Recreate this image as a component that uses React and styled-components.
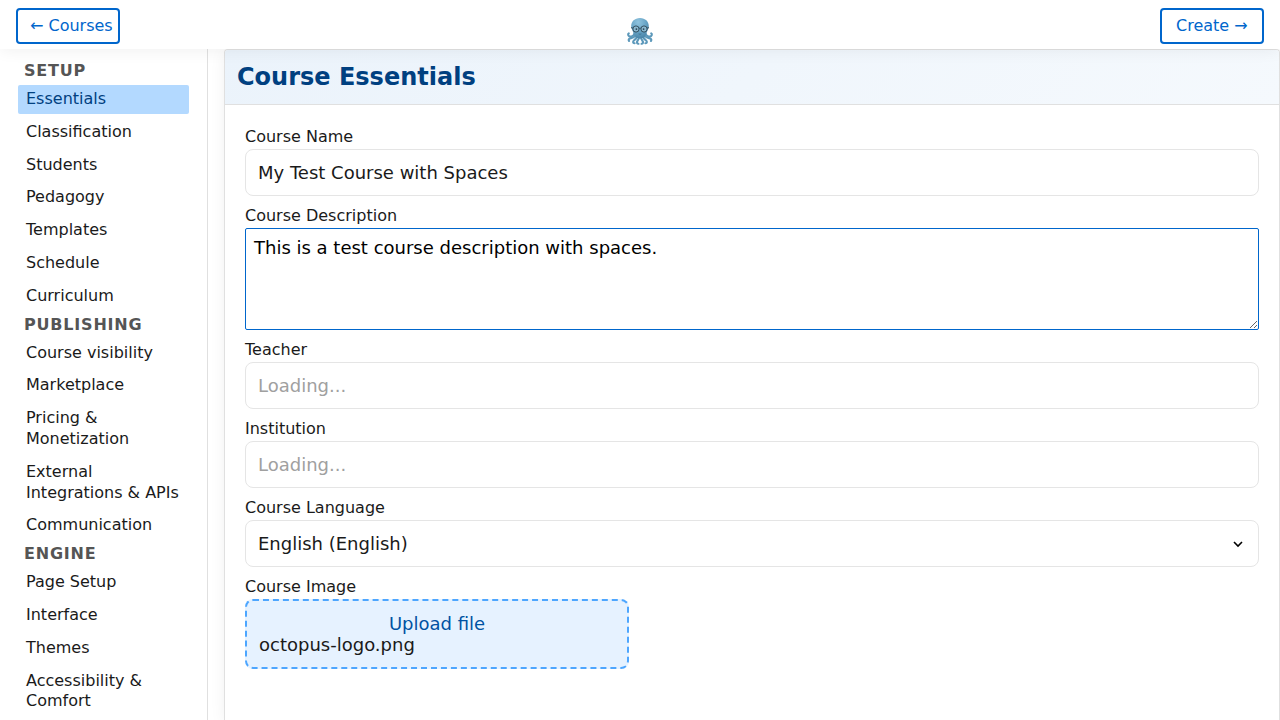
import React from "react";
import styled, { createGlobalStyle, css } from "styled-components";

const Global = createGlobalStyle`
  *, *::before, *::after { box-sizing: border-box; }
  body {
    margin: 0;
    overflow: hidden;
    background: #fff;
    color: #1a1a1a;
    font-family: "DejaVu Sans", sans-serif;
    font-size: 16px;
    line-height: 1.3;
  }
  button, input, textarea, select { font-family: inherit; }
`;

const Page = styled.div`
  display: flex;
  flex-direction: column;
  height: 100vh;
  overflow: hidden;
`;

const TopBar = styled.header`
  position: relative;
  z-index: 2;
  flex: none;
  display: grid;
  grid-template-columns: 1fr auto 1fr;
  height: 49px;
  padding: 8px 16px 0;
  background: #fff;
  box-shadow: 0 2px 16px rgba(0, 0, 0, 0.06);
`;

const NavButton = styled.button`
  justify-self: ${(p) => (p.$end ? "end" : "start")};
  width: 104px;
  height: 36px;
  padding: 0 0 2px ${(p) => (p.$end ? "14px" : "12px")};
  border: 2px solid #0066cc;
  border-radius: 4px;
  background: #fff;
  color: #0066cc;
  font-size: 16px;
  text-align: left;
  white-space: nowrap;
`;

const Logo = styled.svg`
  width: 28px;
  height: 28px;
  margin-top: 9px;
`;

const Body = styled.div`
  flex: 1;
  min-height: 0;
  display: flex;
`;

const Sidebar = styled.nav`
  flex: none;
  width: 208px;
  padding: 8px 18px;
  border-right: 1px solid #e0e0e0;
  overflow: hidden;
`;

const SectionTitle = styled.h2`
  margin: 0;
  height: 28px;
  padding: 4px 6px 0;
  color: #555;
  font-size: 16px;
  font-weight: 700;
  letter-spacing: 0.8px;
`;

const NavList = styled.ul`
  display: flex;
  flex-direction: column;
  gap: 4px;
  margin: 0;
  padding: 0;
  list-style: none;
`;

const NavItem = styled.li`
  padding: 4px 8px;
  border-radius: 2px;
  ${(p) =>
    p.$active &&
    css`
      background: #b3d9ff;
      color: #004080;
    `}
`;

const Main = styled.main`
  flex: 1;
  min-width: 0;
  padding-left: 16px;
  display: flex;
`;

const Card = styled.section`
  flex: 1;
  min-width: 0;
  border: 1px solid #e0e0e0;
  border-bottom: 0;
  border-radius: 4px 4px 0 0;
  background: #fff;
  box-shadow: 0 2px 16px rgba(0, 0, 0, 0.06);
`;

const CardHeader = styled.div`
  height: 55px;
  padding: 12px;
  border-bottom: 1px solid #e0e0e0;
  border-radius: 3px 3px 0 0;
  background: linear-gradient(135deg, #ebf3fb 0%, #f5f9fd 100%);
`;

const CardTitle = styled.h1`
  margin: 0;
  color: #004080;
  font-size: 24px;
  line-height: 31px;
  font-weight: 700;
`;

const Form = styled.form`
  display: flex;
  flex-direction: column;
  gap: 8px;
  padding: 20px;
`;

const Field = styled.div`
  display: flex;
  flex-direction: column;
`;

const Label = styled.label`
  line-height: 24px;
`;

const control = css`
  width: 100%;
  height: 47px;
  padding: 0 12px;
  border: 1px solid #e5e5e5;
  border-radius: 8px;
  background: #fff;
  color: #1a1a1a;
  font-size: 18px;
  outline: none;
`;

const Input = styled.input`
  ${control}
  &::placeholder { color: #a0a0a0; opacity: 1; }
`;

const TextArea = styled.textarea`
  display: block;
  width: 100%;
  height: 102px;
  padding: 8px;
  border: 1px solid #0066cc;
  border-radius: 2px;
  background: #fff;
  color: #000;
  font-size: 18px;
  line-height: 21px;
  outline: none;
  resize: vertical;
`;

const SelectBox = styled.div`
  ${control}
  display: flex;
  align-items: center;
  justify-content: space-between;
`;

const Chevron = styled.svg`
  width: 16px;
  height: 16px;
`;

const DropZone = styled.div`
  width: 384px;
  height: 70px;
  padding: 12px;
  border: 2px dashed #4da6ff;
  border-radius: 8px;
  background: #e6f2ff;
  font-size: 18px;
  line-height: 21px;
`;

const UploadLabel = styled.div`
  color: #0052a3;
  text-align: center;
`;

const sections = [
  {
    title: "SETUP",
    items: ["Essentials", "Classification", "Students", "Pedagogy", "Templates", "Schedule", "Curriculum"],
  },
  {
    title: "PUBLISHING",
    items: ["Course visibility", "Marketplace", "Pricing & Monetization", "External Integrations & APIs", "Communication"],
  },
  {
    title: "ENGINE",
    items: ["Page Setup", "Interface", "Themes", "Accessibility & Comfort"],
  },
];

function Octopus() {
  return (
    <Logo viewBox="0 0 28 28" fill="none" aria-label="Octopus">
      <defs>
        <radialGradient id="skin" cx="0.4" cy="0.2" r="0.85">
          <stop offset="0" stopColor="#8fc3de" />
          <stop offset="0.55" stopColor="#66a3c5" />
          <stop offset="1" stopColor="#4580a4" />
        </radialGradient>
      </defs>
      <g stroke="#5c98ba" strokeWidth="2.1" strokeLinecap="round" strokeLinejoin="round">
        <path d="M8.5 16.5C7.5 20 3.5 20.5 2.3 18.2Q1.7 17 2.8 16.4" />
        <path d="M10 18C7.5 21.5 5 20.8 3.6 21.6Q2 22.6 3.1 24" />
        <path d="M11 19C10.5 23 7.6 22.6 7.2 24.6Q7 26.3 8.6 26.3" />
        <path d="M13 19.5C13.3 22.5 11.2 23.5 11 25Q11 27 12.4 26.8" />
        <path d="M15 19.5C14.7 22.5 16.8 23.5 17 25Q17 27 15.6 26.8" />
        <path d="M17 19C17.5 23 20.4 22.6 20.8 24.6Q21 26.3 19.4 26.3" />
        <path d="M18 18C20.5 21.5 23 20.8 24.4 21.6Q26 22.6 24.9 24" />
        <path d="M19.5 16.5C20.5 20 24.5 20.5 25.7 18.2Q26.3 17 25.2 16.4" />
      </g>
      <path
        d="M14 1C8.7 1 5.2 4.6 5.2 9.2C5.2 12 7.2 14.2 7.8 17C8.5 20.2 11 21.6 14 21.6S19.5 20.2 20.2 17C20.8 14.2 22.8 12 22.8 9.2C22.8 4.6 19.3 1 14 1Z"
        fill="url(#skin)"
      />
      <g fill="#8ab8d0" stroke="#2c4656" strokeWidth="0.9">
        <circle cx="10" cy="12" r="3.1" />
        <circle cx="18" cy="12" r="3.1" />
        <path d="M13.1 11.4Q14 10.7 14.9 11.4M7 11.2L5 10.6M21 11.2L23 10.6" />
      </g>
      <circle cx="10.4" cy="12.1" r="0.9" fill="#2b4555" />
      <circle cx="17.6" cy="12.1" r="0.9" fill="#2b4555" />
      <path d="M12.6 16.8Q14 17.8 15.4 16.8" stroke="#376885" strokeWidth="0.7" />
    </Logo>
  );
}

export default function App() {
  return (
    <Page>
      <Global />
      <TopBar>
        <NavButton>← Courses</NavButton>
        <Octopus />
        <NavButton $end>Create →</NavButton>
      </TopBar>
      <Body>
        <Sidebar>
          {sections.map((section) => (
            <React.Fragment key={section.title}>
              <SectionTitle>{section.title}</SectionTitle>
              <NavList>
                {section.items.map((item) => (
                  <NavItem key={item} $active={item === "Essentials"}>
                    {item}
                  </NavItem>
                ))}
              </NavList>
            </React.Fragment>
          ))}
        </Sidebar>
        <Main>
          <Card>
            <CardHeader>
              <CardTitle>Course Essentials</CardTitle>
            </CardHeader>
            <Form>
              <Field>
                <Label>Course Name</Label>
                <Input defaultValue="My Test Course with Spaces" />
              </Field>
              <Field>
                <Label>Course Description</Label>
                <TextArea defaultValue="This is a test course description with spaces." />
              </Field>
              <Field>
                <Label>Teacher</Label>
                <Input placeholder="Loading..." />
              </Field>
              <Field>
                <Label>Institution</Label>
                <Input placeholder="Loading..." />
              </Field>
              <Field>
                <Label>Course Language</Label>
                <SelectBox>
                  English (English)
                  <Chevron viewBox="0 0 16 16" fill="none" stroke="#000" strokeWidth="1.6">
                    <path d="M4 6L8 10L12 6" />
                  </Chevron>
                </SelectBox>
              </Field>
              <Field>
                <Label>Course Image</Label>
                <DropZone>
                  <UploadLabel>Upload file</UploadLabel>
                  <div>octopus-logo.png</div>
                </DropZone>
              </Field>
            </Form>
          </Card>
        </Main>
      </Body>
    </Page>
  );
}
